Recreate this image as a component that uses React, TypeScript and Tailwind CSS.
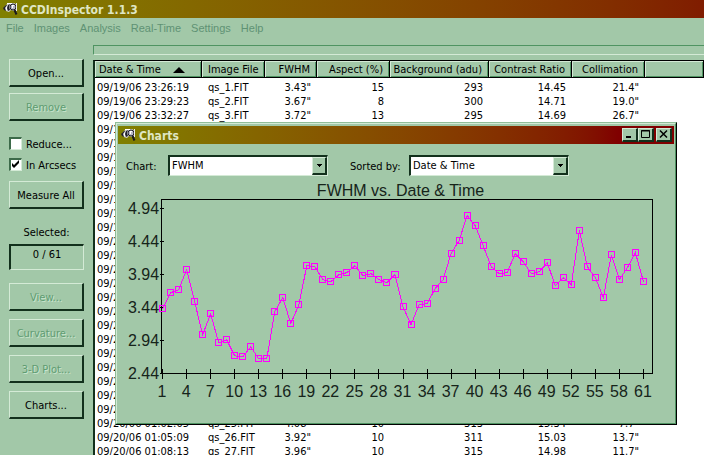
import { useState } from 'react';
import type { ReactNode } from 'react';

interface ImageRow {
  time: string;
  fwhm: number;
  aspect: number;
  background: number;
  contrast: string;
  collimation: string;
}

const images: ImageRow[] = [
  { time: '09/19/06 23:26:19', fwhm: 3.43, aspect: 15, background: 293, contrast: '14.45', collimation: '21.4' },
  { time: '09/19/06 23:29:23', fwhm: 3.67, aspect: 8, background: 300, contrast: '14.71', collimation: '19.0' },
  { time: '09/19/06 23:32:27', fwhm: 3.72, aspect: 13, background: 295, contrast: '14.69', collimation: '26.7' },
  { time: '09/19/06 23:35:31', fwhm: 4.02, aspect: 12, background: 296, contrast: '14.66', collimation: '22.1' },
  { time: '09/19/06 23:38:35', fwhm: 3.53, aspect: 11, background: 297, contrast: '14.72', collimation: '18.3' },
  { time: '09/19/06 23:41:39', fwhm: 3.03, aspect: 10, background: 298, contrast: '14.80', collimation: '15.9' },
  { time: '09/19/06 23:44:43', fwhm: 3.35, aspect: 12, background: 299, contrast: '14.77', collimation: '17.2' },
  { time: '09/19/06 23:47:47', fwhm: 2.91, aspect: 9, background: 300, contrast: '14.85', collimation: '14.0' },
  { time: '09/19/06 23:50:51', fwhm: 2.96, aspect: 10, background: 301, contrast: '14.88', collimation: '13.6' },
  { time: '09/19/06 23:53:55', fwhm: 2.72, aspect: 9, background: 301, contrast: '14.91', collimation: '12.8' },
  { time: '09/19/06 23:56:59', fwhm: 2.7, aspect: 8, background: 302, contrast: '14.93', collimation: '12.1' },
  { time: '09/20/06 00:00:03', fwhm: 2.85, aspect: 9, background: 303, contrast: '14.95', collimation: '11.9' },
  { time: '09/20/06 00:03:07', fwhm: 2.66, aspect: 8, background: 304, contrast: '14.97', collimation: '10.7' },
  { time: '09/20/06 00:06:11', fwhm: 2.66, aspect: 9, background: 304, contrast: '15.01', collimation: '10.2' },
  { time: '09/20/06 00:31:25', fwhm: 3.38, aspect: 11, background: 306, contrast: '15.05', collimation: '12.5' },
  { time: '09/20/06 00:34:29', fwhm: 3.59, aspect: 12, background: 307, contrast: '15.08', collimation: '13.3' },
  { time: '09/20/06 00:37:33', fwhm: 3.2, aspect: 10, background: 307, contrast: '15.11', collimation: '11.4' },
  { time: '09/20/06 00:40:37', fwhm: 3.49, aspect: 10, background: 308, contrast: '15.14', collimation: '10.8' },
  { time: '09/20/06 00:43:41', fwhm: 4.08, aspect: 12, background: 309, contrast: '15.18', collimation: '9.9' },
  { time: '09/20/06 00:46:45', fwhm: 4.06, aspect: 11, background: 310, contrast: '15.20', collimation: '9.4' },
  { time: '09/20/06 00:49:49', fwhm: 3.87, aspect: 10, background: 311, contrast: '15.24', collimation: '9.1' },
  { time: '09/20/06 00:52:53', fwhm: 3.84, aspect: 10, background: 311, contrast: '15.27', collimation: '8.8' },
  { time: '09/20/06 00:55:57', fwhm: 3.94, aspect: 9, background: 312, contrast: '15.29', collimation: '8.2' },
  { time: '09/20/06 00:59:01', fwhm: 3.97, aspect: 10, background: 312, contrast: '15.32', collimation: '7.9' },
  { time: '09/20/06 01:02:05', fwhm: 4.08, aspect: 10, background: 313, contrast: '15.34', collimation: '7.7' },
  { time: '09/20/06 01:05:09', fwhm: 3.92, aspect: 10, background: 311, contrast: '15.03', collimation: '13.7' },
  { time: '09/20/06 01:08:13', fwhm: 3.96, aspect: 10, background: 315, contrast: '14.98', collimation: '11.7' },
];

// FWHM of the images further down the list
const laterFwhm = [
  3.87, 3.82, 3.94, 3.46, 3.19, 3.49, 3.5, 3.73, 3.87, 4.26, 4.46, 4.84, 4.69, 4.38, 4.06, 3.96, 3.97,
  4.26, 4.14, 3.96, 3.99, 4.12, 3.78, 3.9, 3.79, 4.61, 4.06, 3.9, 3.59, 4.25, 3.87, 4.05, 4.28, 3.84,
];

const series = [...images.map((row) => row.fwhm), ...laterFwhm];
const yTicks = [4.94, 4.44, 3.94, 3.44, 2.94, 2.44];
const menus = ['File', 'Images', 'Analysis', 'Real-Time', 'Settings', 'Help'];

// Plot area in SVG units
const LEFT = 43;
const RIGHT = 533;
const TOP = 23;
const BOTTOM = 197;

const xAt = (index: number) => LEFT + 1 + index * 8;
const yAt = (value: number) => Math.round(32 + (4.94 - value) * 66);

function AppIcon() {
  return (
    <svg viewBox="0 0 16 16" className="h-4 w-4 shrink-0" aria-hidden="true">
      <path d="M1 7 3 4l3-2 5 0 3 2v4l-3 2-3-1-2 2-3-1z" fill="#d8d8d8" />
      <path d="M0 7 3 4h1L2 7l1 3-2-1zM5 4l2-1-1 3 1 3-2 1-1-3z" fill="#22222c" />
      <path d="M4 2h5v1H4zM3 6h1v3H3z" fill="#fff" />
      <circle cx="10" cy="6" r="3" fill="#b8b8c8" stroke="#20202c" />
      <path d="M9 4h2v1h-1v2H9z" fill="#fff" />
      <path d="m11.500 9 2 4.500" stroke="#181820" strokeWidth="2" />
      <path d="M13.500 2v8" stroke="#eee" />
    </svg>
  );
}

function SideButton({ children, disabled }: { children: ReactNode; disabled?: boolean }) {
  return (
    <button
      type="button"
      disabled={disabled}
      className="h-7 w-full shrink-0 border-t border-r-2 border-b-2 border-l border-t-[#d4ead6] border-r-[#12301c] border-b-[#12301c] border-l-[#d4ead6] pt-0.5 text-center disabled:text-[#5f9c72] disabled:[text-shadow:1px_1px_0_#c8e4cc]"
    >
      {children}
    </button>
  );
}

function CheckOption({ label, defaultChecked }: { label: string; defaultChecked?: boolean }) {
  return (
    <label className="flex h-[13px] items-center gap-1">
      <span className="relative flex">
        <input
          type="checkbox"
          defaultChecked={defaultChecked}
          className="peer h-[13px] w-[13px] appearance-none border-t-2 border-r border-b border-l-2 border-t-[#3d6b4a] border-r-[#d4ead6] border-b-[#d4ead6] border-l-[#3d6b4a] bg-white"
        />
        <svg viewBox="0 0 13 13" className="pointer-events-none absolute inset-0 hidden peer-checked:block">
          <path d="M3 5v3l2 2 5-5V2L5 7z" fill="#000" />
        </svg>
      </span>
      <span className="pt-0.5 whitespace-nowrap">{label}</span>
    </label>
  );
}

function Dropdown({ id, value, options, onChange }: { id: string; value: string; options: string[]; onChange: (value: string) => void }) {
  return (
    <div className="relative h-[21px] w-40">
      <select
        id={id}
        value={value}
        onChange={(e) => onChange(e.target.value)}
        className="h-full w-full appearance-none border-t-2 border-r border-b border-l-2 border-t-[#12301c] border-r-[#d4ead6] border-b-[#d4ead6] border-l-[#12301c] bg-white pr-4 pl-0.5 outline-none"
      >
        {options.map((option) => (
          <option key={option}>{option}</option>
        ))}
      </select>
      <span className="pointer-events-none absolute top-0.5 right-px bottom-px flex w-[15px] items-center justify-center border-t border-r-2 border-b-2 border-l border-t-[#d4ead6] border-r-[#12301c] border-b-[#12301c] border-l-[#d4ead6] bg-[#a2c8a8]">
        <svg viewBox="0 0 5 3" className="h-[3px] w-[5px]" shapeRendering="crispEdges">
          <path d="M0 0h5L2.500 3z" />
        </svg>
      </span>
    </div>
  );
}

function WindowButton({ label, children }: { label: string; children: ReactNode }) {
  return (
    <button
      type="button"
      aria-label={label}
      className="h-3.5 w-4 border-t border-r-2 border-b-2 border-l border-t-[#d4ead6] border-r-[#12301c] border-b-[#12301c] border-l-[#d4ead6] bg-[#a2c8a8]"
    >
      <svg viewBox="0 0 13 11" className="h-[11px] w-[13px]" fill="none" stroke="#000">
        {children}
      </svg>
    </button>
  );
}

function FwhmChart({ title }: { title: string }) {
  const points = series.map((value, i) => `${xAt(i) + 0.5},${yAt(value) + 0.5}`).join(' ');

  return (
    <svg viewBox="0 0 555 247" className="block h-auto w-full fill-[#16241a] font-['Liberation_Sans',sans-serif] text-base">
      <text x="282" y="20" textAnchor="middle">
        {title}
      </text>
      <g stroke="#000" fill="none" shapeRendering="crispEdges">
        <rect x={LEFT + 0.5} y={TOP + 0.5} width={RIGHT - LEFT} height={BOTTOM - TOP} />
        {yTicks.map((tick) => (
          <path key={tick} d={`M${LEFT - 1} ${yAt(tick) + 0.5}h4`} />
        ))}
        {series.map((_, i) => (i % 3 === 0 ? <path key={i} d={`M${xAt(i) + 0.5} ${BOTTOM - 4}v10`} /> : null))}
      </g>
      {yTicks.map((tick) => (
        <text key={tick} x="41" y={yAt(tick) + 6} textAnchor="end">
          {tick.toFixed(2)}
        </text>
      ))}
      {series.map((_, i) =>
        i % 3 === 0 ? (
          <text key={i} x={xAt(i)} y="221" textAnchor="middle">
            {i + 1}
          </text>
        ) : null
      )}
      <g stroke="#ff00ff" fill="none" shapeRendering="crispEdges">
        <polyline points={points} />
        {series.map((value, i) => (
          <rect key={i} x={xAt(i) - 2.5} y={yAt(value) - 2.5} width="6" height="6" />
        ))}
      </g>
    </svg>
  );
}

function ChartsWindow() {
  const [chart, setChart] = useState('FWHM');
  const [sort, setSort] = useState('Date & Time');

  return (
    <section className="absolute top-[122px] right-[27px] left-[115px] border-t border-r border-b border-l border-t-[#8fbd98] border-r-black border-b-black border-l-[#8fbd98] bg-[#a2c8a8]">
      <div className="border border-t-[#d4ead6] border-r-[#4f9462] border-b-[#4f9462] border-l-[#d4ead6] px-px pt-0.5">
        <header className="flex h-[18px] items-center bg-linear-to-r from-[#808000] to-[#800000] to-90% pr-0.5 pl-[3px]">
          <AppIcon />
          <h2 className="ml-0.5 flex-1 pt-0.5 text-xs font-bold text-[#dfe6c4]">Charts</h2>
          <WindowButton label="Minimize">
            <path d="M3 8h5" strokeWidth="2" />
          </WindowButton>
          <WindowButton label="Maximize">
            <path d="M2.500 1.500h8v7h-8zM2 2h9" />
          </WindowButton>
          <span className="w-0.5" />
          <WindowButton label="Close">
            <path d="m3 1.500 7 7m0-7-7 7" strokeWidth="1.500" />
          </WindowButton>
        </header>
        <div className="flex items-center pt-[11px] pl-2">
          <label htmlFor="chart" className="w-[42px] pt-0.5">
            Chart:
          </label>
          <Dropdown id="chart" value={chart} options={['FWHM', 'Aspect', 'Background', 'Collimation']} onChange={setChart} />
          <label htmlFor="sort" className="ml-[22px] w-[59px] pt-0.5 whitespace-nowrap">
            Sorted by:
          </label>
          <Dropdown id="sort" value={sort} options={['Date & Time', 'Image File', 'FWHM']} onChange={setSort} />
        </div>
        <FwhmChart title={`${chart} vs. ${sort}`} />
      </div>
    </section>
  );
}

const headCell =
  'border-r border-b border-black bg-[#a2c8a8] p-0 pt-px font-normal whitespace-nowrap shadow-[inset_1px_1px_0_#d4ead6,inset_-1px_-1px_0_#4f9462]';

function ImageTable() {
  return (
    <div className="min-w-0 flex-1 overflow-hidden border-t border-l-2 border-t-black border-l-[#12301c] bg-white">
      <table className="w-full table-fixed border-separate border-spacing-0">
        <colgroup>
          <col className="w-[107px]" />
          <col className="w-[63px]" />
          <col className="w-[52px]" />
          <col className="w-[73px]" />
          <col className="w-[99px]" />
          <col className="w-[83px]" />
          <col className="w-[73px]" />
          <col />
        </colgroup>
        <thead>
          <tr className="h-[17px] leading-[15px]">
            <th className={`${headCell} pl-1 text-left`} aria-sort="ascending">
              Date &amp; Time
              <svg viewBox="0 0 12 6" className="ml-3 inline h-1.5 w-3">
                <path d="M6 0l6 6H0z" />
              </svg>
            </th>
            <th className={`${headCell} pl-1.5 text-left`}>Image File</th>
            <th className={`${headCell} pr-1.5 text-right`}>FWHM</th>
            <th className={`${headCell} pr-1.5 text-right`}>Aspect (%)</th>
            <th className={`${headCell} pr-1.5 text-right`}>Background (adu)</th>
            <th className={`${headCell} pr-1.5 text-right`}>Contrast Ratio</th>
            <th className={`${headCell} pr-1.5 text-right`}>Collimation</th>
            <td className={headCell} />
          </tr>
          <tr className="h-[3px]">
            <td className="p-0" colSpan={8} />
          </tr>
        </thead>
        <tbody>
          {images.map((row, i) => (
            <tr key={row.time} className="h-3.5 text-right leading-[14px] whitespace-nowrap">
              <td className="p-0 pl-0.5 text-left">{row.time}</td>
              <td className="p-0 pl-1.5 text-left">qs_{i + 1}.FIT</td>
              <td className="p-0 pr-1.5">{row.fwhm.toFixed(2)}"</td>
              <td className="p-0 pr-1.5">{row.aspect}</td>
              <td className="p-0 pr-1.5">{row.background}</td>
              <td className="p-0 pr-1.5">{row.contrast}</td>
              <td className="p-0 pr-1.5">{row.collimation}"</td>
              <td className="p-0" />
            </tr>
          ))}
        </tbody>
      </table>
    </div>
  );
}

export default function App() {
  return (
    <div className="relative flex h-screen flex-col overflow-hidden bg-[#a2c8a8] font-['DejaVu_Sans_Condensed','DejaVu_Sans',sans-serif] text-[11px] leading-[14px] text-black">
      <header className="flex h-[18px] shrink-0 items-center bg-linear-to-r from-[#808000] to-[#801c00] pl-[3px]">
        <AppIcon />
        <h1 className="ml-0.5 pt-0.5 text-xs font-bold text-[#dfe6c4]">CCDInspector 1.1.3</h1>
      </header>
      <nav className="flex h-5 shrink-0 items-center gap-2.5 pl-1.5 font-['Liberation_Sans',sans-serif] text-[#5f9274]">
        {menus.map((menu) => (
          <button key={menu} type="button">
            {menu}
          </button>
        ))}
      </nav>
      <div className="flex min-h-0 flex-1 pt-[7px]">
        <aside className="flex w-[93px] shrink-0 flex-col px-[9px] pt-3.5">
          <div className="flex flex-col gap-1.5">
            <SideButton>Open...</SideButton>
            <SideButton disabled>Remove</SideButton>
          </div>
          <div className="flex flex-col gap-2 pt-4 pb-2.5">
            <CheckOption label="Reduce..." />
            <CheckOption label="In Arcsecs" defaultChecked />
          </div>
          <SideButton>Measure All</SideButton>
          <p className="pt-[17px] pb-1 text-center">Selected:</p>
          <output className="h-[26px] border-t-2 border-r border-b border-l-2 border-t-[#12301c] border-r-[#d4ead6] border-b-[#d4ead6] border-l-[#12301c] pt-0.5 text-center">
            0 / 61
          </output>
          <div className="flex flex-col gap-2 pt-[13px]">
            <SideButton disabled>View...</SideButton>
            <SideButton disabled>Curvature...</SideButton>
            <SideButton disabled>3-D Plot...</SideButton>
            <SideButton>Charts...</SideButton>
          </div>
        </aside>
        <main className="flex min-w-0 flex-1 flex-col">
          <div className="mb-[5px] h-2.5 shrink-0 border-t border-b border-l border-t-[#4f9462] border-b-[#d4ead6] border-l-[#4f9462]" />
          <ImageTable />
        </main>
      </div>
      <ChartsWindow />
    </div>
  );
}
